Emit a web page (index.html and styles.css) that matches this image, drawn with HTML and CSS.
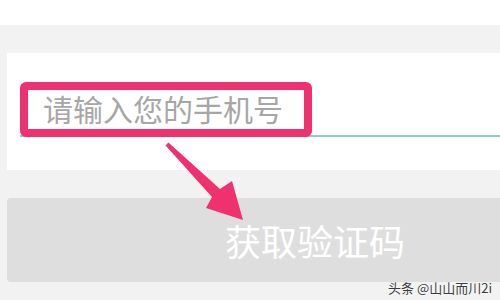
FILE: index.html
```html
<!DOCTYPE html>
<html lang="zh">
<head>
<meta charset="utf-8">
<link rel="stylesheet" href="styles.css">
</head>
<body>
<div class="page">
  <div class="topbar"></div>
  <div class="card">
    <div class="field">
      <span class="placeholder">请输入您的手机号</span>
      <div class="highlight"></div>
    </div>
  </div>
  <div class="button">获取验证码</div>
  <svg class="arrow" width="500" height="300" viewBox="0 0 500 300">
    <polygon points="168.4,142.6 220,189 232,181 243,220 206,208 212,197 165.6,145.4" fill="#f0316f"/>
  </svg>
  <div class="watermark">头条 @山山而川2i</div>
</div>
</body>
</html>
```
FILE: styles.css
```css
html, body {
  margin: 0;
  padding: 0;
}
body {
  background: #f2f2f2;
  font-family: "Noto Sans CJK SC", "Noto Sans", sans-serif;
}
.page {
  position: relative;
  width: 500px;
  height: 300px;
  overflow: hidden;
  display: flex;
  flex-direction: column;
}
.topbar {
  height: 25px;
  background: #ffffff;
  flex: none;
}
.card {
  margin-top: 28px;
  margin-left: 7px;
  height: 117px;
  background: #ffffff;
  flex: none;
  padding: 29px 0 0 13px;
  box-sizing: border-box;
}
.field {
  position: relative;
  height: 55px;
  border-bottom: 2px solid #8ccfc5;
  box-sizing: border-box;
  display: flex;
  align-items: center;
  padding-left: 23px;
}
.placeholder {
  font-size: 30px;
  line-height: 1;
  color: #a6a6a6;
  margin-top: -1px;
}
.highlight {
  position: absolute;
  left: 0;
  top: 0;
  width: 292px;
  height: 55px;
  border: 8px solid #f0316f;
  border-radius: 6px;
  box-sizing: border-box;
}
.button {
  margin-top: 28px;
  margin-left: 7px;
  height: 84px;
  background: #dedede;
  border-radius: 4px 0 0 4px;
  flex: none;
  display: flex;
  align-items: center;
  padding-left: 218px;
  box-sizing: border-box;
  color: #ffffff;
  font-size: 36px;
  line-height: 1;
}
.arrow {
  position: absolute;
  left: 0;
  top: 0;
}
.watermark {
  position: absolute;
  right: 8px;
  bottom: 6px;
  font-size: 13px;
  line-height: 1;
  color: #3a3a3a;
  text-shadow: 0 0 2px #ffffff, 0 0 1px #ffffff;
}
```
